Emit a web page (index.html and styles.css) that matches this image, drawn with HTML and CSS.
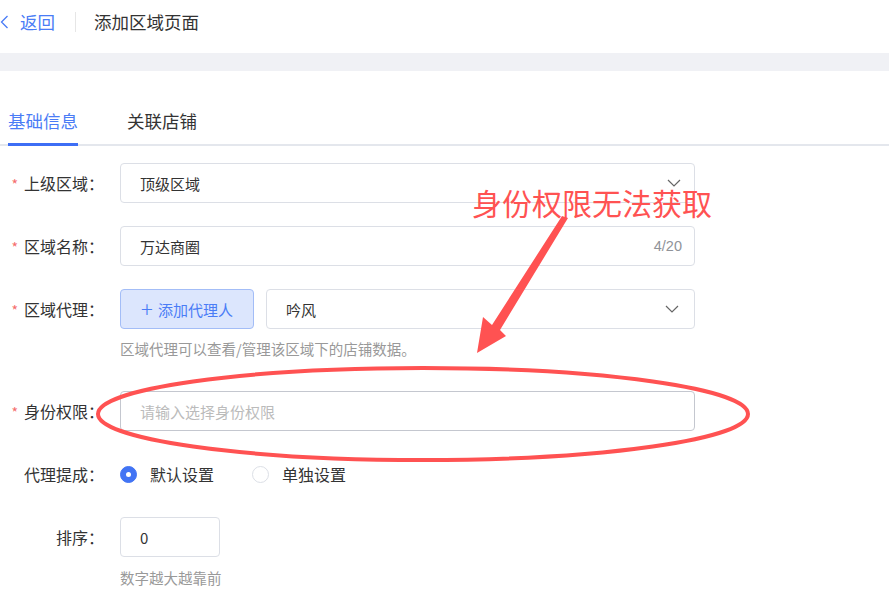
FILE: index.html
```html
<!DOCTYPE html>
<html>
<head>
  <title>添加区域页面</title>
  <link rel="stylesheet" href="styles.css">
</head>

<body>
  <header class="page-header">
    <a class="page-header__back" href="#">
      <svg class="page-header__arrow" width="9" height="14" viewBox="0 0 9 14">
        <path d="M7.5 1 L1.5 7 L7.5 13" fill="none" stroke="#4a7cf6" stroke-width="1.3"/>
      </svg>
      返回
    </a>
    <span class="page-header__divider"></span>
    <h1 class="page-header__title">添加区域页面</h1>
  </header>

  <div class="page-gap"></div>

  <main class="page-body">
    <div class="tabs">
      <div class="tabs__item tabs__item--active">基础信息</div>
      <div class="tabs__item">关联店铺</div>
    </div>

    <form class="form">
      <div class="form-item">
        <label class="form-item__label form-item__label--required">上级区域：</label>
        <div class="form-item__control">
          <div class="input input--wide">
            <span class="input__value">顶级区域</span>
            <svg class="input__chevron" width="14" height="8" viewBox="0 0 14 8">
              <path d="M1 1 L7 7 L13 1" fill="none" stroke="#666" stroke-width="1.2"/>
            </svg>
          </div>
        </div>
      </div>

      <div class="form-item">
        <label class="form-item__label form-item__label--required">区域名称：</label>
        <div class="form-item__control">
          <div class="input input--wide">
            <span class="input__value">万达商圈</span>
            <span class="input__count">4/20</span>
          </div>
        </div>
      </div>

      <div class="form-item form-item--hint">
        <label class="form-item__label form-item__label--required">区域代理：</label>
        <div class="form-item__control">
          <div class="agent-row">
            <button type="button" class="btn-add"><span class="btn-add__plus">+</span>添加代理人</button>
            <div class="input input--agent">
              <span class="input__value">吟风</span>
              <svg class="input__chevron" width="14" height="8" viewBox="0 0 14 8">
                <path d="M1 1 L7 7 L13 1" fill="none" stroke="#666" stroke-width="1.2"/>
              </svg>
            </div>
          </div>
          <p class="form-item__hint">区域代理可以查看/管理该区域下的店铺数据。</p>
        </div>
      </div>

      <div class="form-item">
        <label class="form-item__label form-item__label--required">身份权限：</label>
        <div class="form-item__control">
          <div class="input input--wide input--dark">
            <span class="input__placeholder">请输入选择身份权限</span>
          </div>
        </div>
      </div>

      <div class="form-item">
        <label class="form-item__label">代理提成：</label>
        <div class="form-item__control radios">
          <span class="radio radio--checked"><span class="radio__dot"></span>默认设置</span>
          <span class="radio"><span class="radio__dot"></span>单独设置</span>
        </div>
      </div>

      <div class="form-item">
        <label class="form-item__label">排序：</label>
        <div class="form-item__control">
          <div class="input input--small">
            <span class="input__value">0</span>
          </div>
          <p class="form-item__hint form-item__hint--sort">数字越大越靠前</p>
        </div>
      </div>
    </form>
  </main>

  <!-- markup drawn over the screenshot -->
  <div class="note">身份权限无法获取</div>
  <svg class="note-shapes" width="889" height="613" viewBox="0 0 889 613">
    <polygon points="562,216 568,218 500,330 506,336 477,353 483,317 492,325" fill="#ff5252"/>
    <ellipse cx="423" cy="414" rx="325" ry="46" fill="none" stroke="#ff5252" stroke-width="4"/>
  </svg>
</body>

</html>
```

FILE: styles.css
```css
* {
  box-sizing: border-box;
}

body {
  margin: 0;
  font-family: "Noto Sans CJK SC", "Liberation Sans", sans-serif;
  color: #333333;
  background-color: #ffffff;
  position: relative;
  overflow: hidden;
  height: 613px;
}

a {
  text-decoration: none;
}

.page-header {
  height: 53px;
  padding-bottom: 10px;
  display: flex;
  align-items: center;
}

.page-header__back {
  display: flex;
  align-items: center;
  color: #4a7cf6;
  font-size: 17.5px;
}

.page-header__arrow {
  margin-right: 11px;
}

.page-header__divider {
  width: 1px;
  height: 20px;
  background-color: #e6e6e6;
  margin: 0 18px 0 20px;
}

.page-header__title {
  margin: 0;
  font-size: 17.5px;
  font-weight: normal;
  color: #333333;
}

.page-gap {
  height: 18px;
  background-color: #f0f1f5;
}

.tabs {
  display: flex;
  margin-top: 30px;
  padding-left: 8px;
  border-bottom: 2px solid #e4e7ed;
}

.tabs__item {
  height: 45px;
  line-height: 40px;
  margin-right: 49px;
  margin-bottom: -2px;
  font-size: 17.5px;
  color: #333333;
  border-bottom: 3px solid transparent;
}

.tabs__item--active {
  color: #4a7cf6;
  border-bottom-color: #3d6ef5;
}

.form {
  margin-top: 17px;
}

.form-item {
  display: flex;
  margin-bottom: 23px;
}

.form-item--hint {
  margin-bottom: 32px;
}

.form-item__label {
  width: 120px;
  height: 40px;
  line-height: 40px;
  padding-right: 16px;
  text-align: right;
  font-size: 16px;
  color: #333333;
}

.form-item__label--required::before {
  content: "*";
  color: #f56c6c;
  font-size: 14px;
  margin-right: 6px;
}

.form-item__control {
  display: flex;
  flex-direction: column;
}

.form-item__hint {
  margin: 10px 0 0;
  line-height: 20px;
  font-size: 14.5px;
  color: #999999;
}

.form-item__hint--sort {
  margin-top: 11px;
}

.input {
  height: 40px;
  border: 1px solid #dcdfe6;
  border-radius: 4px;
  padding: 0 12px 0 19px;
  display: flex;
  align-items: center;
  justify-content: space-between;
  font-size: 15px;
  background-color: #ffffff;
}

.input--wide {
  width: 575px;
}

.input--dark {
  border-color: #c4c7cf;
}

.input--agent {
  width: 429px;
  padding-right: 14px;
}

.input--small {
  width: 100px;
}

.input__value {
  color: #333333;
}

.input__placeholder {
  color: #bbbbbb;
}

.input__chevron {
  margin-right: 1px;
}

.input__count {
  color: #909399;
  font-size: 14.5px;
  font-family: "Liberation Sans", sans-serif;
}

.agent-row {
  display: flex;
  gap: 12px;
}

.btn-add {
  width: 134px;
  height: 40px;
  border: 1px solid #a3bdf7;
  border-radius: 4px;
  background-color: #dce6fd;
  color: #4a7cf6;
  font-family: inherit;
  font-size: 15px;
  padding: 0;
  display: flex;
  align-items: center;
  justify-content: center;
}

.btn-add__plus {
  font-size: 22px;
  font-weight: 300;
  line-height: 1;
  margin-right: 5px;
  margin-top: -2px;
}

.radios {
  flex-direction: row;
  align-items: center;
  height: 40px;
}

.radio {
  display: flex;
  align-items: center;
  font-size: 16px;
  color: #333333;
  margin-right: 38px;
}

.radio__dot {
  width: 17px;
  height: 17px;
  border-radius: 50%;
  border: 1px solid #dcdfe6;
  margin-right: 13px;
  position: relative;
}

.radio--checked .radio__dot {
  border-color: #4274f4;
  background-color: #4274f4;
}

.radio--checked .radio__dot::after {
  content: "";
  position: absolute;
  left: 5px;
  top: 5px;
  width: 5px;
  height: 5px;
  border-radius: 50%;
  background-color: #ffffff;
}

.note {
  position: absolute;
  left: 472px;
  top: 182px;
  font-size: 30px;
  line-height: 40px;
  color: #ff5252;
  white-space: nowrap;
}

.note-shapes {
  position: absolute;
  left: 0;
  top: 0;
  pointer-events: none;
}
```
